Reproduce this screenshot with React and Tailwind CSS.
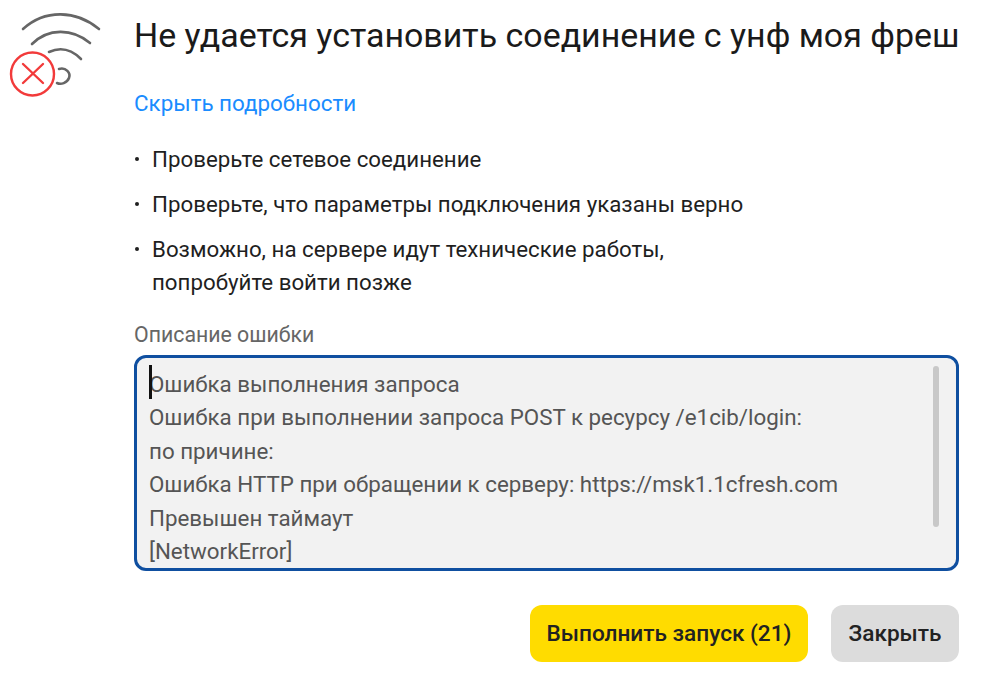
// Диалог ошибки соединения

const HINTS = [
  ["Проверьте сетевое соединение"],
  ["Проверьте, что параметры подключения указаны верно"],
  ["Возможно, на сервере идут технические работы,", "попробуйте войти позже"],
]

const ERROR_LINES = [
  "Ошибка выполнения запроса",
  "Ошибка при выполнении запроса POST к ресурсу /e1cib/login:",
  "по причине:",
  "Ошибка HTTP при обращении к серверу: https://msk1.1cfresh.com",
  "Превышен таймаут",
  "[NetworkError]",
]

function WifiErrorIcon() {
  return (
    <svg width="110" height="100" viewBox="0 0 110 100" fill="none" className="block">
      <g stroke="#666" strokeWidth="2.6" strokeLinecap="round">
        <path d="M23 29 C 45 9, 76 10, 99 29" />
        <path d="M32 44 C 48 28, 72 28, 90 43" />
        <path d="M49 52 C 60 47, 71 49, 81 59" />
        <path d="M59 69 C 66 67, 71 73, 69 78 C 67 83, 61 85, 57 83" />
      </g>
      <circle cx="32.5" cy="74" r="21.5" fill="#fff" stroke="#f23a3a" strokeWidth="2.4" />
      <path d="M23 64 L 43 83 M43 64 L 23 83" stroke="#f23a3a" strokeWidth="2.4" strokeLinecap="round" />
    </svg>
  )
}

export default function App() {
  return (
    <div className="flex h-[677px] w-[987px] overflow-hidden bg-white font-['Roboto',sans-serif]">
      <div className="w-[134px] shrink-0">
        <WifiErrorIcon />
      </div>

      <div className="w-[825px] shrink-0">
        <h1 className="mt-[14px] h-[44px] whitespace-nowrap text-[33.95px] font-normal leading-[44px] text-[#1a1a1a]">
          Не удается установить соединение с унф моя фреш
        </h1>

        <div className="mt-[32px] text-[22.4px] leading-[26px] text-[#1a8cff]">Скрыть подробности</div>

        <ul className="mt-[30px] flex flex-col gap-[19px] text-[22.3px] leading-[26px] text-[#1f1f1f]">
          {HINTS.map((lines) => (
            <li key={lines[0]} className="relative pl-[18px]">
              <span className="absolute left-[1px] top-[11px] h-[4px] w-[4px] rounded-full bg-[#1f1f1f]" />
              {lines.map((line) => (
                <div key={line} className="leading-[40px] -my-[7px]">{line}</div>
              ))}
            </li>
          ))}
        </ul>

        <div className="mt-[27px] text-[21.3px] leading-[26px] text-[#666]">Описание ошибки</div>

        <div className="relative mt-[7px] h-[216px] overflow-hidden rounded-[12px] border-[3px] border-[#0f4fa0] bg-[#f2f2f2] pl-[12px] pt-[9.5px] text-[22.35px] leading-[33.6px] text-[#555]">
          {ERROR_LINES.map((line) => (
            <div key={line} className="whitespace-nowrap">{line}</div>
          ))}
          <span className="absolute left-[12px] top-[7px] h-[34px] w-[3px] bg-[#111]" />
          <span className="absolute right-[17px] top-[8px] h-[161px] w-[6px] rounded-full bg-[#c8c8c8]" />
        </div>

        <div className="mt-[34px] flex justify-end gap-[23px]">
          <button className="flex h-[57px] w-[278px] items-center justify-center rounded-[12px] bg-[#ffdc00] text-[22.6px] font-medium text-[#222]">
            Выполнить запуск (21)
          </button>
          <button className="flex h-[57px] w-[128px] items-center justify-center rounded-[12px] bg-[#dcdcdc] text-[22.6px] font-medium text-[#222]">
            Закрыть
          </button>
        </div>
      </div>
    </div>
  )
}
